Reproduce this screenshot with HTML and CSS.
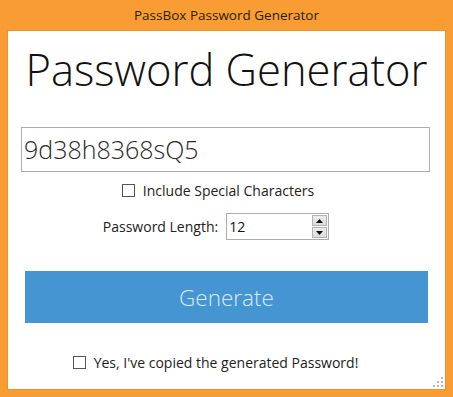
FILE: index.html
```html
<!DOCTYPE html>
<html>
<head>
<meta charset="utf-8">
<link rel="stylesheet" href="styles.css">
</head>
<body>
<div class="window">
  <div class="titlebar">PassBox Password Generator</div>
  <div class="client">
    <h1 class="heading">Password Generator</h1>
    <div class="pw-box">9d38h8368sQ5</div>
    <div class="check-row special">
      <span class="box"></span>
      <span class="check-label">Include Special Characters</span>
    </div>
    <div class="length-row">
      <span class="length-label">Password Length:</span>
      <div class="spin">
        <span class="spin-value">12</span>
        <div class="spin-buttons">
          <span class="spin-btn"><svg width="7" height="4" viewBox="0 0 7 4"><path d="M0 4 L3.5 0 L7 4 Z" fill="#111"/></svg></span>
          <span class="spin-btn"><svg width="7" height="4" viewBox="0 0 7 4"><path d="M0 0 L7 0 L3.5 4 Z" fill="#111"/></svg></span>
        </div>
      </div>
    </div>
    <div class="generate">Generate</div>
    <div class="check-row copied">
      <span class="box"></span>
      <span class="check-label">Yes, I've copied the generated Password!</span>
    </div>
    <svg class="grip" width="10" height="10" viewBox="0 0 10 10">
      <rect x="8" y="0" width="2" height="2" fill="#b8b8b8"/>
      <rect x="4" y="4" width="2" height="2" fill="#b8b8b8"/>
      <rect x="8" y="4" width="2" height="2" fill="#b8b8b8"/>
      <rect x="0" y="8" width="2" height="2" fill="#b8b8b8"/>
      <rect x="4" y="8" width="2" height="2" fill="#b8b8b8"/>
      <rect x="8" y="8" width="2" height="2" fill="#b8b8b8"/>
    </svg>
  </div>
</div>
</body>
</html>
```

FILE: styles.css
```css
* { box-sizing: border-box; }
html, body { margin: 0; padding: 0; }
body {
  font-family: "Open Sans", "Noto Sans", sans-serif;
  background: #f89c33;
}
.window {
  width: 453px;
  height: 397px;
  background: #f89c33;
  padding: 0 8px 8px 8px;
  display: flex;
  flex-direction: column;
}
.titlebar {
  height: 31px;
  line-height: 31px;
  text-align: center;
  font-size: 13.5px;
  color: #2a1e0c;
  padding-bottom: 2px;
}
.client {
  position: relative;
  flex: 1;
  background: #ffffff;
  box-shadow: 0 0 0 1px #ef9228;
  display: flex;
  flex-direction: column;
}
.heading {
  margin: 15px 0 33px 0;
  height: 48px;
  line-height: 48px;
  font-size: 43.5px;
  font-weight: 300;
  color: #111;
  text-align: center;
}
.pw-box {
  margin: 0 15px 0 13px;
  height: 45px;
  border: 1px solid #abadb3;
  font-size: 25px;
  font-weight: 300;
  line-height: 43px;
  padding-left: 2px;
  color: #2a2a2a;
}
.check-row {
  display: flex;
  align-items: center;
  justify-content: center;
  font-size: 14px;
  color: #222;
}
.special {
  margin-top: 10px;
  height: 17px;
  padding-right: 17px;
}
.copied {
  margin-top: 31px;
  height: 17px;
  padding-right: 22px;
}
.box {
  width: 13px;
  height: 13px;
  border: 1px solid #555;
  background: #fff;
  margin-right: 8px;
  flex: none;
}
.length-row {
  margin-top: 14px;
  height: 27px;
  display: flex;
  align-items: center;
  justify-content: center;
  padding-right: 21px;
  font-size: 14px;
  color: #222;
}
.length-label { margin-right: 8px; }
.spin {
  width: 103px;
  height: 27px;
  border: 1px solid #abadb3;
  display: flex;
  align-items: center;
  padding: 1px 1px 1px 2px;
}
.spin-value {
  flex: 1;
  font-size: 14px;
  color: #111;
}
.spin-buttons {
  width: 15px;
  height: 23px;
  display: flex;
  flex-direction: column;
  gap: 1px;
}
.spin-btn {
  flex: 1;
  background: linear-gradient(#ececec, #dcdcdc);
  border: 1px solid #b3b3b3;
  display: flex;
  align-items: center;
  justify-content: center;
}
.generate {
  margin: 31px 17px 0 17px;
  height: 52px;
  background: #4495d1;
  color: #d6ecfb;
  font-size: 22.5px;
  font-weight: 300;
  display: flex;
  align-items: center;
  justify-content: center;
}
.grip {
  position: absolute;
  right: 2px;
  bottom: 2px;
}
```
